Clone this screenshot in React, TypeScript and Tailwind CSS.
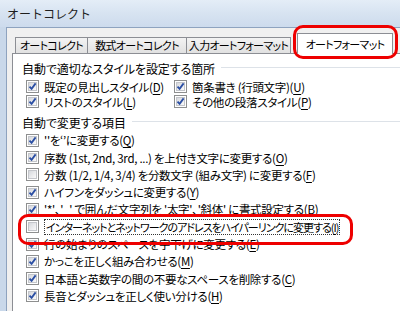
import type { ReactNode } from "react";

function Check({ checked }: { checked: boolean }) {
  return (
    <span className="flex h-[13px] w-[13px] shrink-0 items-center justify-center border border-[#8e8f8f] bg-white">
      <span className="relative flex h-[9px] w-[9px] items-center justify-center border border-[#c4c6cb] bg-gradient-to-br from-[#d6d8dd] to-[#fafafa]">
        {checked && (
          <svg viewBox="0 0 9 9" className="absolute -left-px -top-px h-[9px] w-[9px]">
            <path d="M1.5 4.6 L3.6 6.9 L7.6 1.4" fill="none" stroke="#2a4ea3" strokeWidth="1.8" strokeLinejoin="miter" />
          </svg>
        )}
      </span>
    </span>
  );
}

function Key({ k }: { k: string }) {
  return (
    <>
      (<span className="underline underline-offset-2">{k}</span>)
    </>
  );
}

function Row({ checked, children, focus }: { checked: boolean; children: ReactNode; focus?: boolean }) {
  return (
    <div className="flex h-[17.3px] items-center gap-[5px] whitespace-nowrap">
      <Check checked={checked} />
      <span
        className={
          focus
            ? "border border-dotted border-[#333] px-[1px] text-[11px] leading-[14px] tracking-[-1px]"
            : "leading-[14px]"
        }
      >
        {children}
      </span>
    </div>
  );
}

function Section({ title }: { title: string }) {
  return (
    <div className="flex h-[16px] items-center gap-[6px] whitespace-nowrap">
      <span className="text-[12px] tracking-[-0.1px]">{title}</span>
      <span className="mb-[3px] h-px flex-1 bg-[#dde2e8]" />
    </div>
  );
}

export default function App() {
  const tabs = [
    { label: "オートコレクト", w: "w-[73px]" },
    { label: "数式オートコレクト", w: "w-[100px]" },
    { label: "入力オートフォーマット", w: "w-[105px]" },
  ];

  return (
    <div className='relative flex h-[311px] w-[400px] flex-col overflow-hidden bg-[#c9d8ea] font-["Noto_Sans_CJK_JP","Noto_Sans",sans-serif] text-[11.5px] tracking-[-0.3px] text-black [font-feature-settings:"palt"]'>
      <div className="flex h-[27px] shrink-0 items-center bg-gradient-to-b from-[#e4edf7] via-[#d7e3f1] to-[#cddbed] pl-[7px] text-[12px] tracking-normal text-[#1e1e1e] [font-feature-settings:normal]">
        オートコレクト
      </div>

      <div className="ml-[6px] flex flex-1 flex-col border-l border-t border-[#8ea3bf] bg-[#f0f0f0] pl-[5px] pt-[6px]">
        <div className="flex h-[19px] items-end pl-[3px] text-[11px] tracking-[-0.7px]">
          {tabs.map((t, i) => (
            <div
              key={t.label}
              className={`flex h-[16px] items-center justify-center whitespace-nowrap border border-b-0 border-[#8c8e94] bg-gradient-to-b from-[#f3f3f3] to-[#e1e1e1] leading-none ${t.w} ${i > 0 ? "-ml-px" : ""}`}
            >
              {t.label}
            </div>
          ))}
          <div className="relative z-10 ml-[6px] -mb-px flex h-[21px] w-[96px] items-center justify-center whitespace-nowrap border border-b-0 border-[#8c8e94] bg-white leading-none">
            オートフォーマット
          </div>
        </div>

        <div className="flex flex-1 flex-col border-l border-t border-[#8c8e94] bg-white pl-[9px] pt-[7px]">
          <Section title="自動で適切なスタイルを設定する箇所" />
          <div className="mt-[1px] flex flex-col pl-[4px]">
            <div className="grid grid-cols-[148px_1fr]">
              <Row checked>既定の見出しスタイル<Key k="D" /></Row>
              <Row checked>箇条書き (行頭文字)<Key k="U" /></Row>
            </div>
            <div className="-mt-[2px] grid grid-cols-[148px_1fr]">
              <Row checked>リストのスタイル<Key k="L" /></Row>
              <Row checked>その他の段落スタイル<Key k="P" /></Row>
            </div>
          </div>

          <div className="mt-[4px]">
            <Section title="自動で変更する項目" />
          </div>
          <div className="mt-[1px] flex flex-col pl-[4px]">
            <Row checked>''を‘’に変更する<Key k="Q" /></Row>
            <Row checked>序数 (1st, 2nd, 3rd, ...) を上付き文字に変更する<Key k="O" /></Row>
            <Row checked={false}>分数 (1/2, 1/4, 3/4) を分数文字 (組み文字) に変更する<Key k="F" /></Row>
            <Row checked>ハイフンをダッシュに変更する<Key k="Y" /></Row>
            <Row checked>'*'、'_' で囲んだ文字列を '太字'、'斜体' に書式設定する<Key k="B" /></Row>
            <Row checked={false} focus>
              インターネットとネットワークのアドレスをハイパーリンクに変更する<Key k="I" />
            </Row>
            <Row checked>行の始まりのスペースを字下げに変更する<Key k="E" /></Row>
            <Row checked>かっこを正しく組み合わせる<Key k="M" /></Row>
            <Row checked>日本語と英数字の間の不要なスペースを削除する<Key k="C" /></Row>
            <Row checked>長音とダッシュを正しく使い分ける<Key k="H" /></Row>
          </div>
        </div>
      </div>

      <div className="pointer-events-none absolute left-[293px] top-[25px] h-[34px] w-[105px] rounded-[10px] border-[3px] border-[#ee0000]" />
      <div className="pointer-events-none absolute left-[18px] top-[214px] h-[31px] w-[335px] rounded-[10px] border-[3px] border-[#ee0000]" />
    </div>
  );
}
